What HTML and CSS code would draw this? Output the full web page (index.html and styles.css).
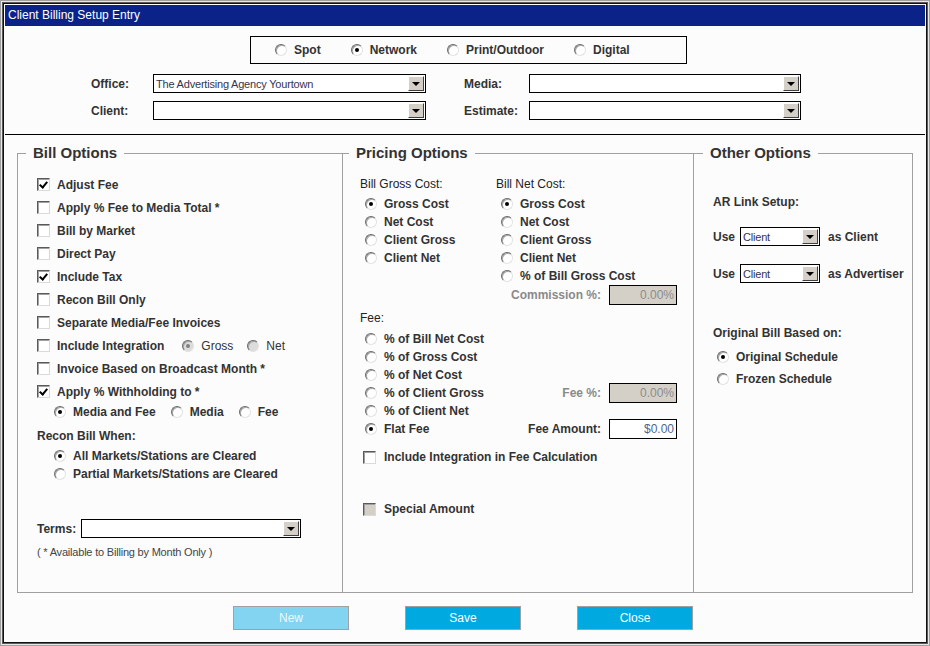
FILE: index.html
```html
<!DOCTYPE html>
<html lang="en">
<head>
	<meta charset="UTF-8">
	<title>Client Billing Setup Entry</title>
	<link rel="stylesheet" href="styles.css">
</head>
<body>
	<div class="window">
		<div class="titlebar">Client Billing Setup Entry</div>

		<div class="media-type">
			<span class="opt"><span class="radio"></span>Spot</span>
			<span class="opt"><span class="radio on"></span>Network</span>
			<span class="opt"><span class="radio"></span>Print/Outdoor</span>
			<span class="opt"><span class="radio"></span>Digital</span>
		</div>

		<div class="lookup">
			<span class="lbl">Office:</span>
			<div class="select"><span class="value">The Advertising Agency Yourtown</span><span class="drop"></span></div>
			<span class="lbl right">Media:</span>
			<div class="select"><span class="value"></span><span class="drop"></span></div>
			<span class="lbl">Client:</span>
			<div class="select"><span class="value"></span><span class="drop"></span></div>
			<span class="lbl right">Estimate:</span>
			<div class="select"><span class="value"></span><span class="drop"></span></div>
		</div>

		<hr class="divider">

		<div class="groups">
			<fieldset class="group bill">
				<legend>Bill Options</legend>
				<div class="bill-body">
					<div class="check-row"><span class="check on"></span>Adjust Fee</div>
					<div class="check-row"><span class="check"></span>Apply % Fee to Media Total *</div>
					<div class="check-row"><span class="check"></span>Bill by Market</div>
					<div class="check-row"><span class="check"></span>Direct Pay</div>
					<div class="check-row"><span class="check on"></span>Include Tax</div>
					<div class="check-row"><span class="check"></span>Recon Bill Only</div>
					<div class="check-row"><span class="check"></span>Separate Media/Fee Invoices</div>
					<div class="check-row">
						<span class="check"></span>Include Integration
						<span class="opt light gross"><span class="radio on off"></span>Gross</span>
						<span class="opt light net"><span class="radio off"></span>Net</span>
					</div>
					<div class="check-row"><span class="check"></span>Invoice Based on Broadcast Month *</div>
					<div class="check-row"><span class="check on"></span>Apply % Withholding to *</div>
					<div class="sub-row">
						<span class="opt"><span class="radio on"></span>Media and Fee</span>
						<span class="opt spaced"><span class="radio"></span>Media</span>
						<span class="opt spaced"><span class="radio"></span>Fee</span>
					</div>
					<div class="subhead recon-head">Recon Bill When:</div>
					<div class="radio-row first"><span class="opt"><span class="radio on"></span>All Markets/Stations are Cleared</span></div>
					<div class="radio-row"><span class="opt"><span class="radio"></span>Partial Markets/Stations are Cleared</span></div>
					<div class="terms-row">
						<span class="lbl">Terms:</span>
						<div class="select terms"><span class="value"></span><span class="drop"></span></div>
					</div>
					<div class="note">( * Available to Billing by Month Only )</div>
				</div>
			</fieldset>

			<fieldset class="group pricing">
				<legend>Pricing Options</legend>
				<div class="pricing-body">
					<div class="cost-cols">
						<div>
							<div class="subhead light">Bill Gross Cost:</div>
							<div class="opt-row"><span class="opt"><span class="radio on"></span>Gross Cost</span></div>
							<div class="opt-row"><span class="opt"><span class="radio"></span>Net Cost</span></div>
							<div class="opt-row"><span class="opt"><span class="radio"></span>Client Gross</span></div>
							<div class="opt-row"><span class="opt"><span class="radio"></span>Client Net</span></div>
						</div>
						<div>
							<div class="subhead light">Bill Net Cost:</div>
							<div class="opt-row"><span class="opt"><span class="radio on"></span>Gross Cost</span></div>
							<div class="opt-row"><span class="opt"><span class="radio"></span>Net Cost</span></div>
							<div class="opt-row"><span class="opt"><span class="radio"></span>Client Gross</span></div>
							<div class="opt-row"><span class="opt"><span class="radio"></span>Client Net</span></div>
							<div class="opt-row"><span class="opt"><span class="radio"></span>% of Bill Gross Cost</span></div>
						</div>
					</div>
					<div class="field-row">
						<span class="field-lbl dim">Commission %:</span><span class="num off">0.00%</span>
					</div>

					<div class="subhead light fee-head">Fee:</div>
					<div class="opt-row"><span class="opt"><span class="radio"></span>% of Bill Net Cost</span></div>
					<div class="opt-row"><span class="opt"><span class="radio"></span>% of Gross Cost</span></div>
					<div class="opt-row"><span class="opt"><span class="radio"></span>% of Net Cost</span></div>
					<div class="opt-row">
						<span class="opt"><span class="radio"></span>% of Client Gross</span>
						<span class="field"><span class="field-lbl dim">Fee %:</span><span class="num off">0.00%</span></span>
					</div>
					<div class="opt-row"><span class="opt"><span class="radio"></span>% of Client Net</span></div>
					<div class="opt-row">
						<span class="opt"><span class="radio on"></span>Flat Fee</span>
						<span class="field"><span class="field-lbl">Fee Amount:</span><span class="num amount">$0.00</span></span>
					</div>

					<div class="check-row fee-check"><span class="check"></span>Include Integration in Fee Calculation</div>
					<div class="check-row special"><span class="check off"></span>Special Amount</div>
				</div>
			</fieldset>

			<fieldset class="group other">
				<legend>Other Options</legend>
				<div class="other-body">
					<div class="subhead">AR Link Setup:</div>
					<div class="use-row">
						<span>Use</span>
						<div class="select small"><span class="value">Client</span><span class="drop"></span></div>
						<span class="after">as Client</span>
					</div>
					<div class="use-row second">
						<span>Use</span>
						<div class="select small"><span class="value">Client</span><span class="drop"></span></div>
						<span class="after">as Advertiser</span>
					</div>
					<div class="subhead based-head">Original Bill Based on:</div>
					<div class="radio-row first"><span class="opt"><span class="radio on"></span>Original Schedule</span></div>
					<div class="radio-row"><span class="opt"><span class="radio"></span>Frozen Schedule</span></div>
				</div>
			</fieldset>
		</div>

		<div class="actions">
			<span class="btn off">New</span>
			<span class="btn">Save</span>
			<span class="btn">Close</span>
		</div>
	</div>
</body>
</html>
```
FILE: styles.css
```css
* {
	box-sizing: border-box;
}

body {
	margin: 0;
	background: #fcfcfc;
	font-family: "Liberation Sans", Arial, sans-serif;
	font-size: 12px;
	color: #333;
}

.window {
	width: 930px;
	height: 646px;
	border: 1px solid #a0a0a0;
	box-shadow: inset 0 0 0 1px #e8e8e8, inset 0 0 0 2px #5a5a5a, inset 0 0 0 3px #111;
	padding: 4px;
	background: #fcfcfc;
}

.titlebar {
	height: 21px;
	line-height: 21px;
	padding-left: 3px;
	background: #0b2289;
	color: #fff;
	font-size: 12px;
}

/* top radio strip */
.media-type {
	display: flex;
	align-items: center;
	gap: 30px;
	width: 437px;
	height: 28px;
	margin: 10px 0 0 245px;
	padding-left: 24px;
	border: 1px solid #000;
	font-weight: bold;
}

.opt {
	display: flex;
	align-items: center;
	white-space: nowrap;
}

.radio {
	position: relative;
	width: 12px;
	height: 12px;
	margin-right: 7px;
	border-radius: 50%;
	border: 1px solid;
	border-color: #6a6a6a #e2e2e2 #e2e2e2 #6a6a6a;
	background: #fff;
	box-shadow: inset 1px 1px 0 #a8a8a8;
	flex: none;
}

.radio.on::after {
	content: "";
	position: absolute;
	left: 3px;
	top: 3px;
	width: 4px;
	height: 4px;
	border-radius: 50%;
	background: #000;
}

.radio.off {
	background: #dcdcdc;
}

.radio.off.on::after {
	background: #808080;
}

.check {
	position: relative;
	width: 13px;
	height: 13px;
	margin-right: 7px;
	border: 1px solid;
	border-color: #5a5a5a #dadada #dadada #5a5a5a;
	background: #fff;
	box-shadow: inset 1px 1px 0 #a0a0a0;
	flex: none;
}

.check.on::after {
	content: "";
	position: absolute;
	left: 3px;
	top: 1px;
	width: 3px;
	height: 6px;
	border: solid #000;
	border-width: 0 2px 2px 0;
	transform: rotate(40deg);
}

.check.off {
	background: #d4d0c8;
}

/* office / client lookups */
.lookup {
	display: grid;
	grid-template-columns: 62px 273px 103px 272px;
	grid-template-rows: 19px 19px;
	row-gap: 8px;
	align-items: center;
	margin: 10px 0 0 86px;
}

.lbl {
	font-weight: bold;
	white-space: nowrap;
}

.lbl.right {
	padding-left: 38px;
}

.select {
	display: flex;
	align-items: center;
	height: 19px;
	border: 1px solid #000;
	background: #fff;
}

.select .value {
	flex: 1;
	padding-left: 2px;
	font-size: 11px;
	letter-spacing: -0.2px;
	color: #35334f;
	white-space: nowrap;
	overflow: hidden;
}

.drop {
	position: relative;
	width: 16px;
	height: 15px;
	margin-right: 1px;
	background: #d4d0c8;
	border: 1px solid;
	border-color: #fff #404040 #404040 #fff;
	flex: none;
}

.drop::after {
	content: "";
	position: absolute;
	left: 3px;
	top: 5px;
	border-left: 4px solid transparent;
	border-right: 4px solid transparent;
	border-top: 4px solid #000;
}

.divider {
	margin: 14px 0 0;
	height: 0;
	border: 0;
	border-top: 1px solid #000;
}

/* group boxes */
.groups {
	display: grid;
	grid-template-columns: 326px 351px 219px;
	margin: 9px 0 0 12px;
}

.group {
	min-width: 0;
	height: 449px;
	margin: 0;
	padding: 0 0 0 8px;
	border: 1px solid #a0a0a0;
}

.group + .group {
	border-left: none;
}

.pricing {
	padding-left: 6px;
}

.other {
	padding-left: 9px;
}

legend {
	padding: 0 7px;
	font-size: 15px;
	font-weight: bold;
	line-height: 18px;
	color: #333;
}

.subhead {
	height: 18px;
	line-height: 18px;
	font-weight: bold;
	white-space: nowrap;
}

.subhead.light {
	font-weight: normal;
	color: #222;
}

.check-row {
	display: flex;
	align-items: center;
	height: 23px;
	font-weight: bold;
	white-space: nowrap;
}

/* bill options */
.bill-body {
	padding: 11px 0 0 11px;
}

.opt.light {
	font-weight: normal;
}

.gross {
	margin-left: 18px;
}

.net {
	margin-left: 14px;
}

.sub-row {
	display: flex;
	align-items: center;
	height: 17px;
	padding-left: 17px;
	font-weight: bold;
}

.opt.spaced {
	margin-left: 15px;
}

.recon-head {
	margin-top: 7px;
}

.radio-row {
	display: flex;
	align-items: center;
	height: 18px;
	padding-left: 17px;
	font-weight: bold;
}

.radio-row.first {
	margin-top: 2px;
}

.terms-row {
	display: flex;
	align-items: center;
	height: 19px;
	margin-top: 36px;
}

.select.terms {
	width: 220px;
	margin-left: 5px;
}

.note {
	margin-top: 8px;
	font-size: 11px;
	letter-spacing: -0.2px;
	color: #444;
}

/* pricing options */
.pricing-body {
	padding: 13px 16px 0 11px;
}

.cost-cols {
	display: grid;
	grid-template-columns: 136px auto;
}

.cost-cols .subhead {
	margin-bottom: 2px;
}

.opt-row {
	display: flex;
	align-items: center;
	height: 18px;
	padding-left: 5px;
	font-weight: bold;
}

.field-row {
	display: flex;
	align-items: center;
	justify-content: flex-end;
	height: 20px;
}

.field {
	display: flex;
	align-items: center;
	margin-left: auto;
}

.field-lbl {
	margin-right: 8px;
	font-weight: bold;
	white-space: nowrap;
}

.dim {
	color: #8a8a8a;
}

.num {
	width: 68px;
	height: 20px;
	line-height: 18px;
	padding-right: 2px;
	border: 1px solid #000;
	background: #fff;
	text-align: right;
	font-weight: normal;
	flex: none;
}

.num.off {
	background: #d4d0c8;
	color: #8c8c8c;
}

.num.amount {
	color: #4d6690;
}

.fee-head {
	margin: 4px 0 3px;
}

.check-row.fee-check {
	height: 18px;
	margin-top: 10px;
	padding-left: 3px;
}

.check-row.special {
	height: 18px;
	margin-top: 34px;
	padding-left: 3px;
}

.pricing .check {
	margin-right: 8px;
}

/* other options */
.other-body {
	padding: 31px 0 0 10px;
}

.use-row {
	display: flex;
	align-items: center;
	height: 19px;
	margin-top: 16px;
	font-weight: bold;
	white-space: nowrap;
}

.use-row.second {
	margin-top: 18px;
}

.select.small {
	width: 80px;
	margin-left: 5px;
}

.select.small .value {
	font-weight: normal;
}

.after {
	margin-left: 8px;
}

.based-head {
	margin-top: 41px;
}

.other .radio-row {
	padding-left: 4px;
}

.other .radio-row.first {
	margin-top: 6px;
}

.other .radio-row + .radio-row {
	margin-top: 4px;
}

/* buttons */
.actions {
	display: flex;
	gap: 56px;
	margin: 13px 0 0 228px;
}

.btn {
	display: flex;
	align-items: center;
	justify-content: center;
	width: 116px;
	height: 24px;
	border: 1px solid #a0a0a0;
	background: #00aae0;
	color: #fff;
}

.btn.off {
	background: #82d4f0;
	color: #eef8fc;
}
```
